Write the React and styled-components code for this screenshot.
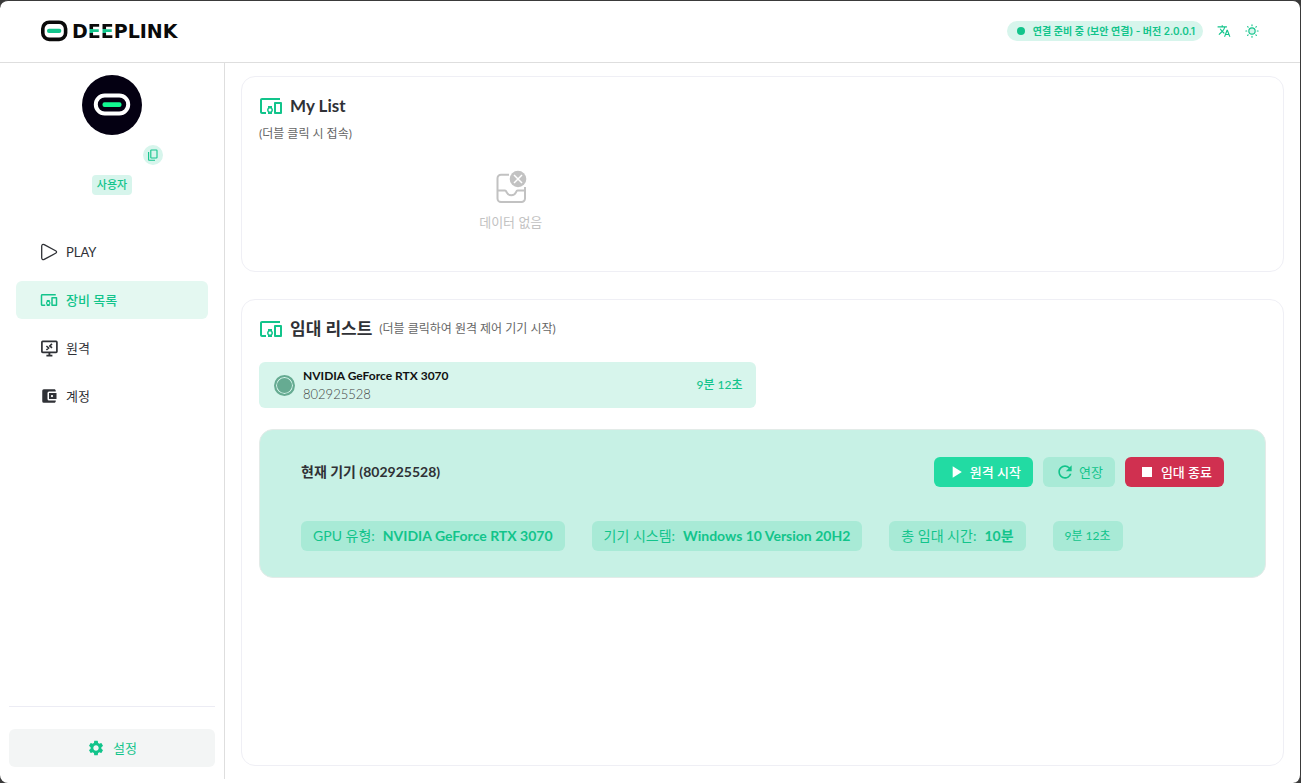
import { useState } from "react";
import styled, { createGlobalStyle } from "styled-components";
import {
  MdOutlineDevicesOther,
  MdTranslate,
  MdAccountBalanceWallet,
  MdSettings,
  MdPlayArrow,
  MdStop,
  MdRefresh,
} from "react-icons/md";

const PlayIcon = () => (
  <svg viewBox="0 0 18 18" fill="none" stroke="currentColor" strokeWidth="1.3">
    <path
      d="M1.7 3.2v11.6c0 1.6 1.2 2.3 2.5 1.6l11.4-6.1c1.3-.7 1.3-1.9 0-2.6L4.2 1.6C2.9.9 1.7 1.6 1.7 3.2z"
      strokeLinejoin="round"
    />
  </svg>
);

const RemoteIcon = () => (
  <svg viewBox="0 0 18 18" fill="none" stroke="currentColor">
    <rect x="1.9" y="2.4" width="15" height="11" rx="0.8" strokeWidth="1.7" />
    <path d="M9.4 13.400v3M6.4 16.6h6" strokeWidth="1.9" />
    <path d="M6.400 7l2.200 2-2.200 2M12 4.900l-2.200 2 2.200 2" strokeWidth="1.6" />
  </svg>
);

const CopyIcon = () => (
  <svg viewBox="0 0 12 12" fill="none" stroke="currentColor" strokeWidth="1.1">
    <rect x="3.8" y="1" width="6.2" height="8" rx="0.6" />
    <path d="M1.6 3v7.6a.6.6 0 0 0 .6.6H8" />
  </svg>
);

const SunIcon = () => (
  <svg
    viewBox="0 0 16 16"
    fill="none"
    stroke="currentColor"
    strokeWidth="1.3"
    strokeLinecap="round"
  >
    <circle cx="8" cy="8" r="3.6" fill="#d7f5ec" />
    <path d="M8 1v1M8 14v1M1 8h1M14 8h1M3 3l.6.6M12.4 12.4l.6.6M3 13l.6-.6M12.4 3.6l.6-.6" />
  </svg>
);

const EmptyIcon = () => (
  <svg width="34" height="34" viewBox="0 0 34 34" fill="none">
    <path
      d="M15 4.8H7a3.5 3.5 0 0 0-3.5 3.5v20.2A3.5 3.5 0 0 0 7 32h20.5a3.5 3.5 0 0 0 3.5-3.5V17"
      stroke="#c2c2c2"
      strokeWidth="2"
    />
    <path
      d="M3.5 20.5h7.5c1.2 0 1.2.8 1.7 1.9 1.6 3.8 7.6 3.8 9.2 0 .5-1.1.5-1.9 1.7-1.9H31"
      stroke="#c2c2c2"
      strokeWidth="2"
    />
    <circle cx="24" cy="9" r="8.3" fill="#c2c2c2" />
    <path d="M20 5l8 8M28 5l-8 8" stroke="#fff" strokeWidth="1.5" />
  </svg>
);

const LogoMark = () => (
  <svg width="28" height="22" viewBox="0 0 28 22">
    <rect x="2.8" y="2.2" width="22.8" height="17.2" rx="6.5" fill="#fff" stroke="#0a0a0a" strokeWidth="3.6" />
    <rect x="7" y="8.7" width="14.3" height="4.4" rx="2" fill="#12c48b" />
  </svg>
);

const AvatarMark = () => (
  <svg width="60" height="60" viewBox="0 0 60 60">
    <circle cx="30" cy="30" r="30" fill="#040012" />
    <rect x="13.8" y="20.6" width="32.4" height="17.8" rx="8.9" fill="none" stroke="#fff" strokeWidth="4" />
    <rect x="20.5" y="27.2" width="19" height="4.8" rx="2" fill="#12fa93" />
  </svg>
);

const menu = [
  { id: "play", label: "PLAY", icon: <PlayIcon /> },
  { id: "devices", label: "장비 목록", icon: <MdOutlineDevicesOther /> },
  { id: "remote", label: "원격", icon: <RemoteIcon /> },
  { id: "account", label: "계정", icon: <MdAccountBalanceWallet /> },
];

const details = [
  { label: "GPU 유형:", value: "NVIDIA GeForce RTX 3070" },
  { label: "기기 시스템:", value: "Windows 10 Version 20H2" },
  { label: "총 임대 시간:", value: "10분" },
];

const App = () => {
  const [active, setActive] = useState("devices");

  return (
    <>
      <GlobalStyle />
      <Window>
        <Header>
          <Logo href="#" aria-label="DEEPLINK">
            <LogoMark />
            <Wordmark>
              D<Accent>EE</Accent>PLINK
            </Wordmark>
          </Logo>
          <HeaderTools>
            <Status>
              <StatusDot />
              연결 준비 중 (보안 연결) - 버전 2.0.0.1
            </Status>
            <ToolButton aria-label="언어">
              <MdTranslate />
            </ToolButton>
            <ToolButton aria-label="테마">
              <SunIcon />
            </ToolButton>
          </HeaderTools>
        </Header>

        <Body>
          <Sidebar>
            <Profile>
              <AvatarMark />
              <UserRow>
                <CopyButton aria-label="복사">
                  <CopyIcon />
                </CopyButton>
              </UserRow>
              <Role>사용자</Role>
            </Profile>
            <Nav>
              {menu.map((item) => (
                <NavItem
                  key={item.id}
                  $active={active === item.id}
                  onClick={() => setActive(item.id)}
                >
                  {item.icon}
                  {item.label}
                </NavItem>
              ))}
            </Nav>
            <SidebarFooter>
              <SettingsButton>
                <MdSettings />
                설정
              </SettingsButton>
            </SidebarFooter>
          </Sidebar>

          <Main>
            <MyListCard>
              <CardTitle>
                <MdOutlineDevicesOther />
                My List
              </CardTitle>
              <Hint>(더블 클릭 시 접속)</Hint>
              <Empty>
                <EmptyIcon />
                데이터 없음
              </Empty>
            </MyListCard>

            <RentCard>
              <TitleRow>
                <CardTitle>
                  <MdOutlineDevicesOther />
                  임대 리스트
                </CardTitle>
                <Hint>(더블 클릭하여 원격 제어 기기 시작)</Hint>
              </TitleRow>

              <DeviceList>
                <Device>
                  <DeviceDot />
                  <DeviceInfo>
                    <DeviceName>NVIDIA GeForce RTX 3070</DeviceName>
                    <DeviceId>802925528</DeviceId>
                  </DeviceInfo>
                  <DeviceTime>9분 12초</DeviceTime>
                </Device>
              </DeviceList>

              <Panel>
                <PanelHeader>
                  <PanelTitle>현재 기기 (802925528)</PanelTitle>
                  <Actions>
                    <StartButton>
                      <MdPlayArrow />
                      원격 시작
                    </StartButton>
                    <ExtendButton>
                      <MdRefresh />
                      연장
                    </ExtendButton>
                    <StopButton>
                      <MdStop />
                      임대 종료
                    </StopButton>
                  </Actions>
                </PanelHeader>
                <Details>
                  {details.map((item) => (
                    <Detail key={item.label}>
                      {item.label}
                      <strong>{item.value}</strong>
                    </Detail>
                  ))}
                  <TimeLeft>9분 12초</TimeLeft>
                </Details>
              </Panel>
            </RentCard>
          </Main>
        </Body>
      </Window>
    </>
  );
};

export default App;

const GlobalStyle = createGlobalStyle`
  * {
    box-sizing: border-box;
  }

  body {
    margin: 0;
    background: #3a3a3a;
    color: #2f3136;
    font-family: Lato, "Noto Sans CJK KR", sans-serif;
    font-size: 13px;
    line-height: 20px;
  }

  button {
    border: none;
    padding: 0;
    background: none;
    font: inherit;
    cursor: pointer;
  }

  svg {
    flex-shrink: 0;
  }
`;

const Window = styled.div`
  display: flex;
  flex-direction: column;
  min-height: 100vh;
  border: solid #3a3a3a;
  border-width: 1px 1px 0 0;
  border-radius: 8px;
  background: #fff;
`;

const Header = styled.header`
  display: flex;
  justify-content: space-between;
  align-items: center;
  height: 62px;
  padding: 0 41px 1px 40px;
  border-bottom: 1px solid #dedede;
`;

const Logo = styled.a`
  display: flex;
  align-items: center;
  gap: 4px;
  color: #0a0a0a;
  text-decoration: none;
`;

const Wordmark = styled.span`
  font-family: "DejaVu Sans", sans-serif;
  font-size: 19px;
  font-weight: 700;
  line-height: 20px;
`;

const Accent = styled.span`
  color: transparent;
  background: linear-gradient(#0a0a0a 41%, #12c48b 41%, #12c48b 57%, #0a0a0a 57%);
  background-clip: text;
`;

const HeaderTools = styled.div`
  display: flex;
  align-items: center;
  gap: 14px;
`;

const Status = styled.div`
  display: flex;
  align-items: center;
  gap: 8px;
  height: 20px;
  padding: 0 8px 0 10px;
  border-radius: 10px;
  background: #d7f5ec;
  color: #12c48b;
  font-family: Inter, "Noto Sans CJK KR", sans-serif;
  font-size: 10px;
  font-weight: 600;
`;

const StatusDot = styled.span`
  width: 8px;
  height: 8px;
  border-radius: 50%;
  background: #12c48b;
`;

const ToolButton = styled.button`
  display: flex;
  color: #12c48b;

  svg {
    width: 14px;
    height: 14px;
  }
`;

const Body = styled.div`
  display: flex;
  flex: 1;
  padding-bottom: 4px;
`;

const Sidebar = styled.aside`
  display: flex;
  flex-direction: column;
  width: 225px;
  flex-shrink: 0;
  border-right: 1px solid #dedede;
`;

const Profile = styled.div`
  display: flex;
  flex-direction: column;
  align-items: center;
  gap: 10px;
  padding-top: 12px;
`;

const UserRow = styled.div`
  display: flex;
  justify-content: flex-end;
  width: 102px;
`;

const CopyButton = styled.button`
  display: flex;
  align-items: center;
  justify-content: center;
  width: 20px;
  height: 20px;
  border-radius: 50%;
  background: #d7f5ec;
  color: #12c48b;

  svg {
    width: 12px;
    height: 12px;
  }
`;

const Role = styled.span`
  padding: 0 5px;
  border-radius: 4px;
  background: #d7f5ec;
  color: #12c48b;
  font-size: 11px;
  font-weight: 500;
`;

const Nav = styled.nav`
  display: flex;
  flex-direction: column;
  gap: 10px;
  padding: 38px 16px 0;
`;

const NavItem = styled.button`
  display: flex;
  align-items: center;
  gap: 8px;
  height: 38px;
  padding: 0 24px;
  border-radius: 6px;
  background: ${(props) => (props.$active ? "#e4f8f1" : "transparent")};
  color: ${(props) => (props.$active ? "#12c48b" : "#2f3136")};
  font-weight: ${(props) => (props.$active ? "500" : "400")};

  svg {
    width: 18px;
    height: 18px;
  }
`;

const SidebarFooter = styled.div`
  margin: auto 9px 12px;
  padding-top: 22px;
  border-top: 1px solid #ececf4;
`;

const SettingsButton = styled.button`
  display: flex;
  align-items: center;
  justify-content: center;
  gap: 8px;
  width: 100%;
  height: 38px;
  border-radius: 6px;
  background: #f3f5f5;
  color: #12c48b;

  svg {
    width: 18px;
    height: 18px;
  }
`;

const Main = styled.main`
  display: flex;
  flex-direction: column;
  flex: 1;
  gap: 27px;
  min-width: 0;
  padding: 13px 16px;
`;

const Card = styled.section`
  padding: 17px;
  border: 1px solid #efeff5;
  border-radius: 14px;
`;

const MyListCard = styled(Card)`
  min-height: 196px;
`;

const RentCard = styled(Card)`
  flex: 1;
`;

const TitleRow = styled.div`
  display: flex;
  align-items: center;
  gap: 7px;
`;

const CardTitle = styled.h2`
  display: flex;
  align-items: center;
  gap: 7px;
  margin: 0;
  font-size: 17px;
  font-weight: 700;
  line-height: 24px;

  svg {
    width: 24px;
    height: 24px;
    color: #12c48b;
  }
`;

const Hint = styled.p`
  margin: 0;
  color: #666;
  font-size: 12px;
  line-height: 24px;

  ${MyListCard} & {
    margin-top: 4px;
  }
`;

const Empty = styled.div`
  display: flex;
  flex-direction: column;
  align-items: center;
  gap: 8px;
  width: 50%;
  padding-top: 24px;
  color: #c2c2c2;
`;

const DeviceList = styled.div`
  width: 50%;
  padding: 21px 7px 0 0;
`;

const Device = styled.div`
  display: flex;
  align-items: center;
  gap: 8px;
  height: 46px;
  padding: 0 13px 0 15px;
  border-radius: 6px;
  background: #d7f5ec;
`;

const DeviceDot = styled.span`
  width: 21px;
  height: 21px;
  border: 2px solid #66ab92;
  border-radius: 50%;
  background: #66ab92;
  box-shadow: inset 0 0 0 1px #d7f5ec;
`;

const DeviceInfo = styled.div`
  display: flex;
  flex-direction: column;
  flex: 1;
  line-height: 18px;
`;

const DeviceName = styled.span`
  color: #111;
  font-size: 12px;
  font-weight: 700;
`;

const DeviceId = styled.span`
  color: #444;
  font-size: 13px;
  font-weight: 300;
`;

const DeviceTime = styled.span`
  color: #12c48b;
  font-size: 12px;
  font-weight: 500;
`;

const Panel = styled.div`
  display: flex;
  flex-direction: column;
  gap: 34px;
  margin-top: 21px;
  padding: 27px 41px 26px;
  border: 1px solid #e3ebe8;
  border-radius: 14px;
  background: #c7f1e5;
`;

const PanelHeader = styled.div`
  display: flex;
  align-items: center;
  justify-content: space-between;
`;

const PanelTitle = styled.h3`
  margin: 0;
  font-size: 14px;
  font-weight: 700;
`;

const Actions = styled.div`
  display: flex;
  gap: 10px;
`;

const ActionButton = styled.button`
  display: flex;
  align-items: center;
  gap: 4px;
  height: 30px;
  padding: 0 12px;
  border-radius: 6px;
  color: #fff;
  font-weight: 500;

  svg {
    width: 20px;
    height: 20px;
  }
`;

const StartButton = styled(ActionButton)`
  background: #22dba3;
`;

const ExtendButton = styled(ActionButton)`
  background: #a8ead6;
  color: #12c48b;
  font-weight: 400;
`;

const StopButton = styled(ActionButton)`
  background: #d03050;
`;

const Details = styled.div`
  display: flex;
  flex-wrap: wrap;
  gap: 27px;
`;

const Detail = styled.span`
  display: flex;
  align-items: center;
  gap: 8px;
  height: 30px;
  padding: 0 12px;
  border-radius: 6px;
  background: #a8ead6;
  color: #12c48b;
  font-size: 14px;

  strong {
    font-weight: 700;
  }
`;

const TimeLeft = styled(Detail)`
  font-size: 12px;
`;
